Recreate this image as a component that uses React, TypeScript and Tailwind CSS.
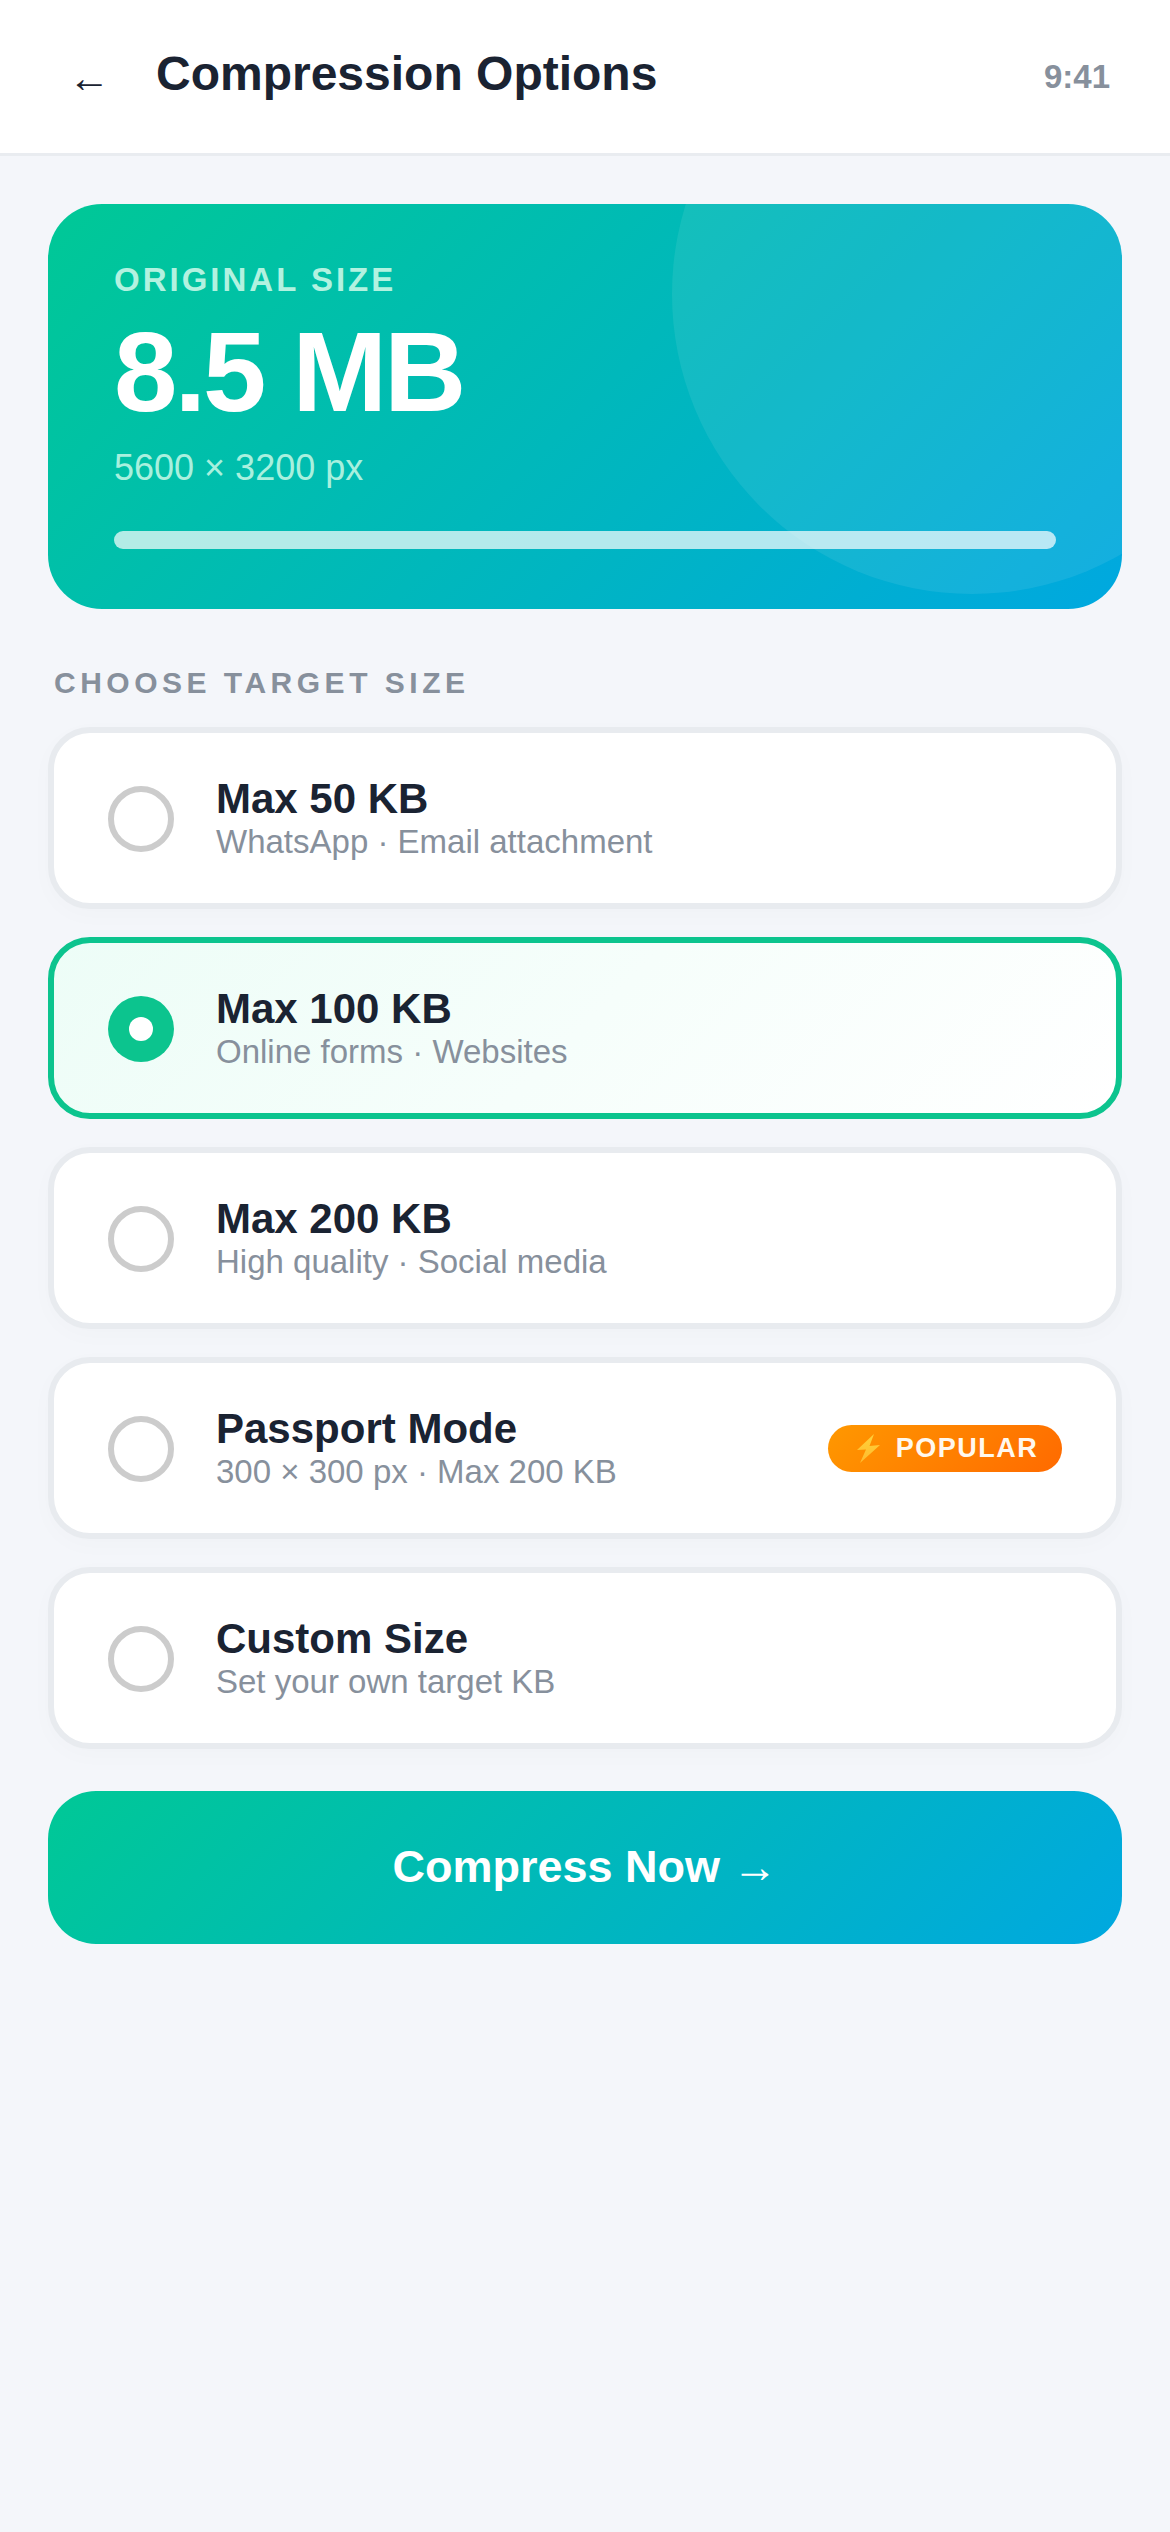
import React from "react";

const options = [
  { title: "Max 50 KB", sub: "WhatsApp · Email attachment" },
  { title: "Max 100 KB", sub: "Online forms · Websites", selected: true },
  { title: "Max 200 KB", sub: "High quality · Social media" },
  { title: "Passport Mode", sub: "300 × 300 px · Max 200 KB", popular: true },
  { title: "Custom Size", sub: "Set your own target KB" },
];

function Bolt() {
  return (
    <svg width="23" height="29" viewBox="0 0 23 29" className="shrink-0">
      <defs>
        <linearGradient id="bolt" x1="0" y1="0" x2="0" y2="1">
          <stop offset="0" stopColor="#ffd23a" />
          <stop offset="1" stopColor="#ffbb2e" />
        </linearGradient>
      </defs>
      <path d="M17 0 L0 16 L9 15.5 L3 29 L23 11 L12.5 12 Z" fill="url(#bolt)" />
    </svg>
  );
}

function OptionCard({ title, sub, selected, popular }: { title: string; sub: string; selected?: boolean; popular?: boolean }) {
  return (
    <div
      className={
        selected
          ? "h-[182px] rounded-[42px] border-[6px] border-[#0cc48e] bg-[linear-gradient(135deg,#edfdf7,#ffffff)] flex items-center px-[54px]"
          : "h-[182px] rounded-[42px] border-[6px] border-[#e8ebef] bg-white shadow-[0_6px_24px_rgba(0,0,0,0.02)] flex items-center px-[54px]"
      }
    >
      {selected ? (
        <div className="w-[66px] h-[66px] mt-[1px] rounded-full bg-[#0cc48e] flex items-center justify-center shrink-0">
          <div className="w-[24px] h-[24px] rounded-full bg-white" />
        </div>
      ) : (
        <div className="w-[66px] h-[66px] mt-[1px] rounded-full border-[6px] border-[#cccccc] shrink-0" />
      )}
      <div className="ml-[42px] flex-1">
        <div className="text-[42px] leading-[45px] font-bold text-[#1a2332]">{title}</div>
        <div className="text-[33px] leading-[39px] pt-[1px] text-[#87909c]">{sub}</div>
      </div>
      {popular && (
        <div className="h-[47px] w-[234px] rounded-full bg-[linear-gradient(135deg,#ff9800,#ff6a00)] flex items-center justify-center gap-[16px] pl-[5px]">
          <Bolt />
          <span className="text-[27px] font-bold tracking-[1.5px] text-[#fff8ee]">POPULAR</span>
        </div>
      )}
    </div>
  );
}

export default function App() {
  return (
    <div className="min-h-[2532px] bg-[#f4f6fa] font-['Liberation_Sans',sans-serif]">
      {/* Header */}
      <header className="h-[156px] bg-white border-b-[3px] border-[#e9ecf0] flex items-center pl-[68px] pr-[60px]">
        <span className="w-[88px] text-[42px] leading-none text-[#1a2332] mt-[2px]">←</span>
        <h1 className="flex-1 text-[48px] font-bold text-[#1a2332] -mt-[6px]">Compression Options</h1>
        <span className="text-[33px] font-bold text-[#87909c]">9:41</span>
      </header>

      <main className="px-[48px] pt-[48px]">
        {/* Original size card */}
        <section className="relative overflow-hidden h-[405px] rounded-[54px] bg-[linear-gradient(135deg,#00c896,#00a8e0)] pt-[56px] px-[66px]">
          <div className="absolute left-[624px] top-[-210px] w-[600px] h-[600px] rounded-full bg-white/[0.08]" />
          <div className="relative">
            <div className="text-[33px] leading-[39px] font-bold tracking-[3px] text-[#b2f2e0]">ORIGINAL SIZE</div>
            <div className="text-[114px] leading-[132px] font-bold tracking-[-3px] text-white mt-[7px]">8.5 MB</div>
            <div className="text-[36px] leading-[42px] text-[#a8f0de] mt-[9px]">5600 × 3200 px</div>
            <div className="h-[18px] rounded-full bg-white/70 mt-[42px]" />
          </div>
        </section>

        <h2 className="text-[30px] leading-[39px] font-bold tracking-[4.5px] text-[#87909c] mt-[54px] ml-[6px]">CHOOSE TARGET SIZE</h2>

        {/* Target size options */}
        <div className="flex flex-col gap-[28px] mt-[25px]">
          {options.map((o) => (
            <OptionCard key={o.title} {...o} />
          ))}
        </div>

        <button className="w-full h-[153px] mt-[42px] pb-[2px] rounded-[48px] bg-[linear-gradient(135deg,#00c896,#00a8e0)] text-white text-[45px] font-bold">
          Compress Now →
        </button>
      </main>
    </div>
  );
}
